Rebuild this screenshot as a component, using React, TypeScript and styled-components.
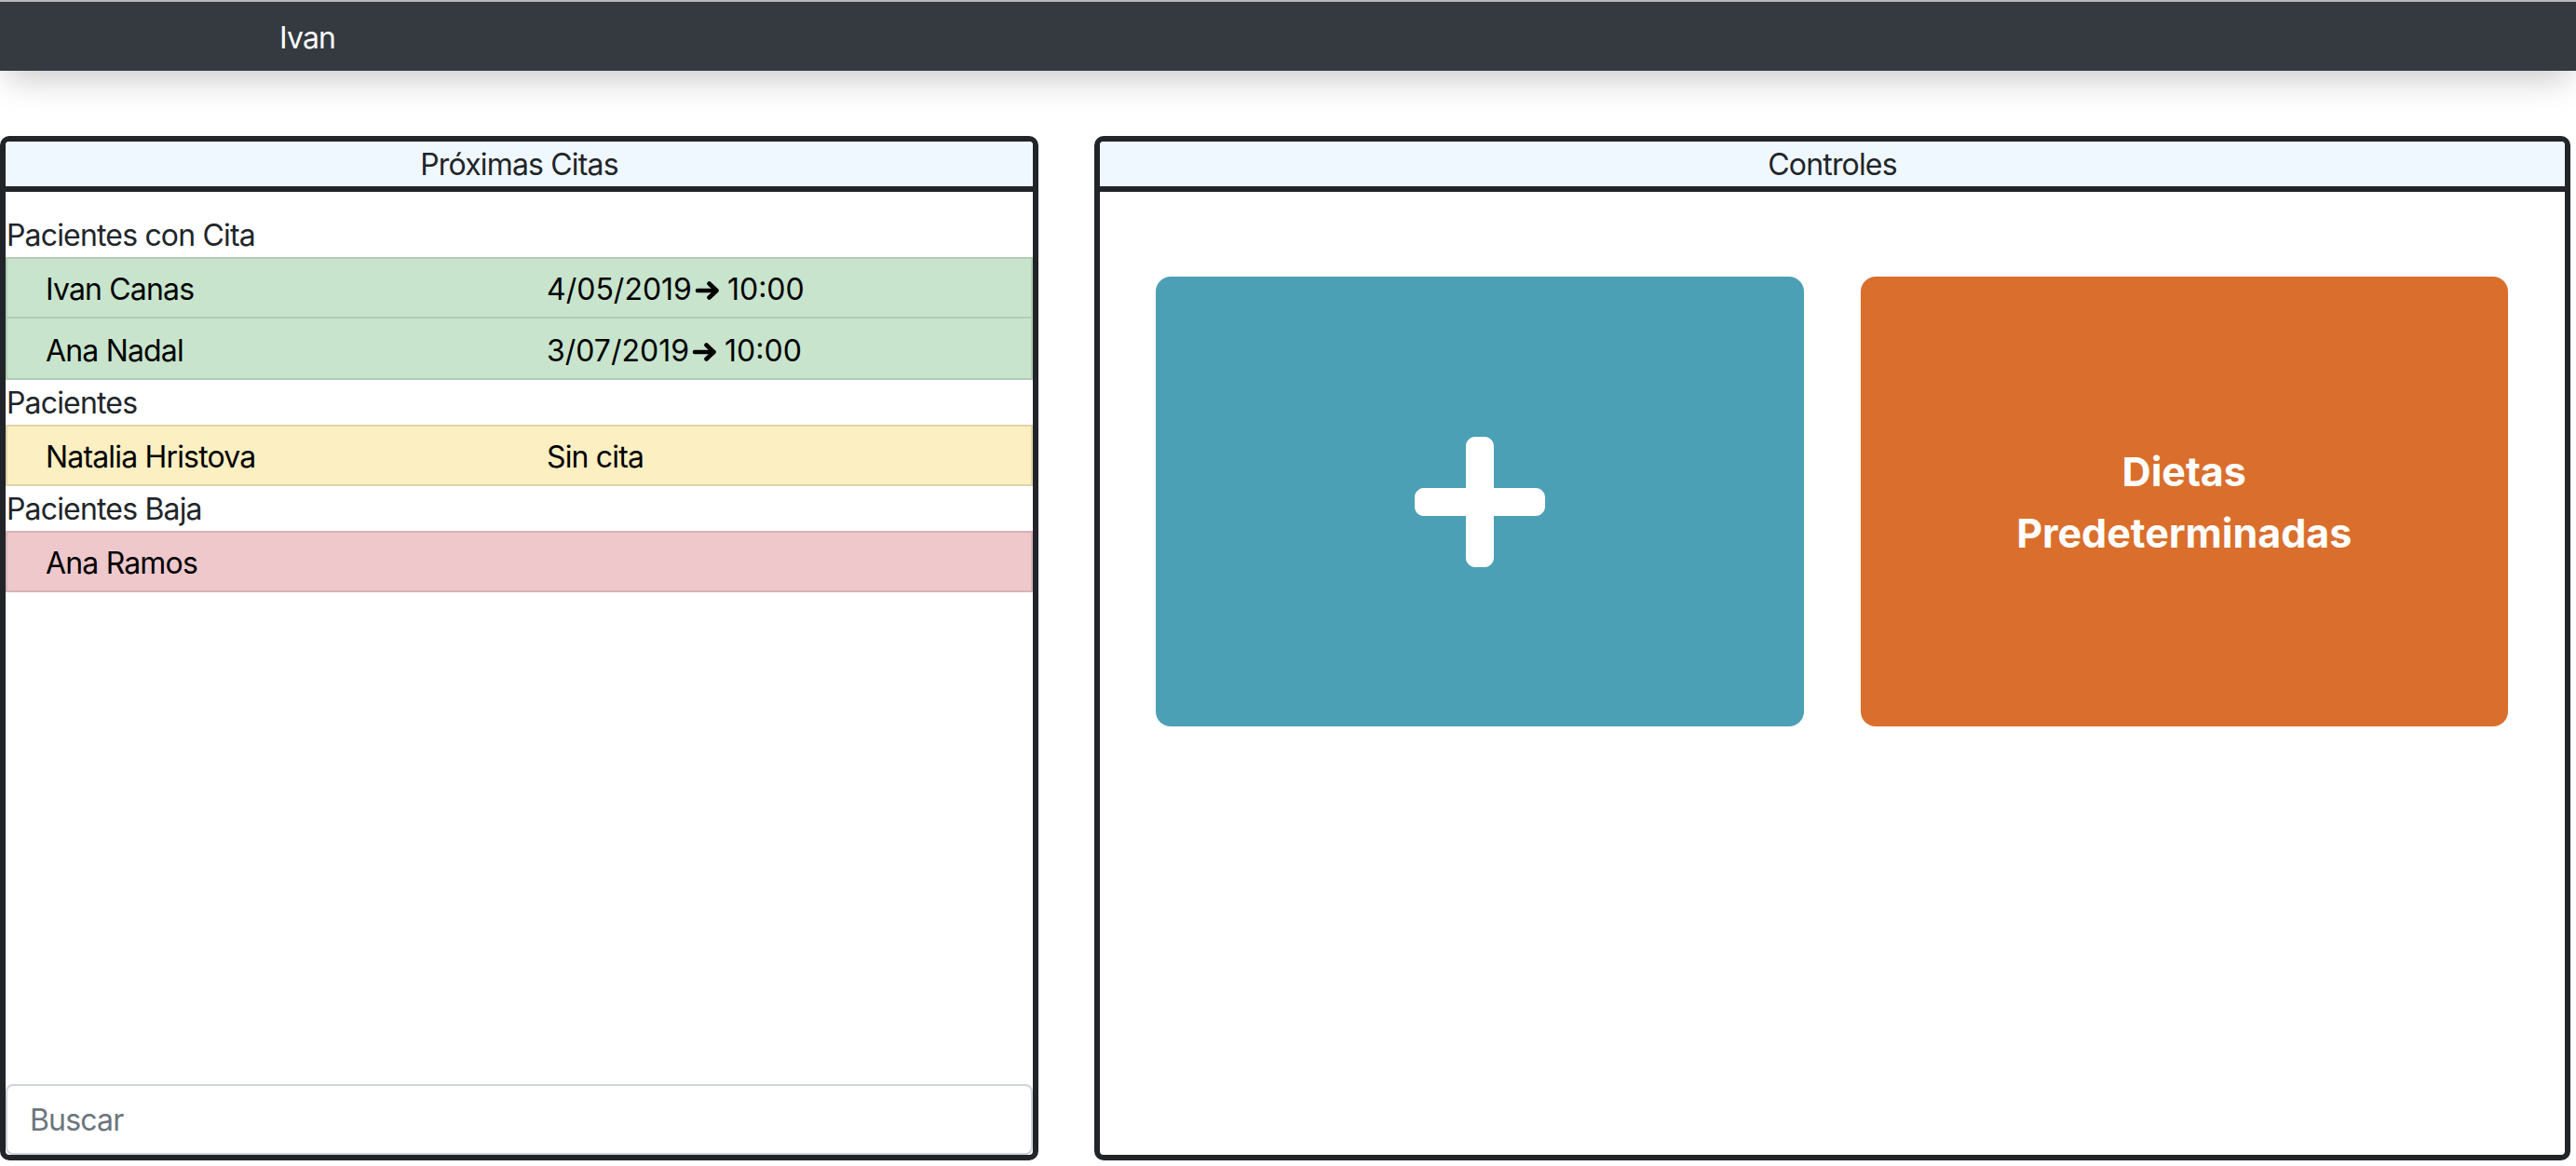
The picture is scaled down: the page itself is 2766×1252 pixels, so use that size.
import React from 'react';
import styled, { createGlobalStyle } from 'styled-components';
import { FaPlus } from 'react-icons/fa';

type Tone = 'success' | 'warning' | 'danger';

interface Patient {
  id: number;
  name: string;
  date?: string;
  time?: string;
  status?: string;
}

const TONES: Record<Tone, { bg: string; border: string }> = {
  success: { bg: '#c8e4cd', border: '#b1cbb5' },
  warning: { bg: '#fcefc1', border: '#e0d4a8' },
  danger: { bg: '#efc8cc', border: '#d6b3b6' },
};

const GROUPS: { title: string; tone: Tone; items: Patient[] }[] = [
  {
    title: 'Pacientes con Cita',
    tone: 'success',
    items: [
      { id: 1, name: 'Ivan Canas', date: '4/05/2019', time: '10:00' },
      { id: 2, name: 'Ana Nadal', date: '3/07/2019', time: '10:00' },
    ],
  },
  {
    title: 'Pacientes',
    tone: 'warning',
    items: [{ id: 3, name: 'Natalia Hristova', status: 'Sin cita' }],
  },
  {
    title: 'Pacientes Baja',
    tone: 'danger',
    items: [{ id: 4, name: 'Ana Ramos' }],
  },
];

const GlobalStyle = createGlobalStyle`
  * {
    box-sizing: border-box;
  }

  body {
    margin: 0;
    background: #fff;
    color: #212529;
    font-family: Inter, 'Liberation Sans', sans-serif;
    font-size: 32px;
    line-height: 48px;
    letter-spacing: -0.026em;
  }
`;

const Arrow = () => (
  <ArrowSvg viewBox="0 0 30 22" aria-hidden="true">
    <path
      d="M3 11h20M15.5 3.5L23.5 11l-8 7.5"
      fill="none"
      stroke="#000"
      strokeWidth="4.6"
      strokeLinecap="round"
      strokeLinejoin="round"
    />
  </ArrowSvg>
);

export default function App() {
  return (
    <>
      <GlobalStyle />
      <Navbar>
        <Brand>Ivan</Brand>
      </Navbar>

      <Main>
        <Panel>
          <PanelHeader>Próximas Citas</PanelHeader>
          <PatientList>
            {GROUPS.map((group) => (
              <React.Fragment key={group.title}>
                <GroupLabel>{group.title}</GroupLabel>
                {group.items.map((itm) => (
                  <PatientRow key={itm.id} $tone={group.tone}>
                    <span>{itm.name}</span>
                    {itm.date ? (
                      <DateCell>
                        {itm.date}
                        <Arrow />
                        {itm.time}
                      </DateCell>
                    ) : (
                      <span>{itm.status}</span>
                    )}
                  </PatientRow>
                ))}
              </React.Fragment>
            ))}
          </PatientList>
          <SearchInput type="text" placeholder="Buscar" />
        </Panel>

        <Panel>
          <PanelHeader>Controles</PanelHeader>
          <Controls>
            <Tile $color="#4ca0b6" type="button">
              <FaPlus size={160} />
            </Tile>
            <Tile $color="#da6f2d" type="button">
              Dietas
              <br />
              Predeterminadas
            </Tile>
          </Controls>
        </Panel>
      </Main>
    </>
  );
}

const Navbar = styled.nav`
  position: relative;
  z-index: 2;
  display: flex;
  align-items: center;
  height: 76px;
  padding: 4px 0 0 300px;
  background: #343a40;
  border-top: 2px solid #b8b8b8;
  box-shadow: 0 14px 36px -6px rgba(0, 0, 0, 0.22);
`;

const Brand = styled.span`
  color: #fff;
  font-size: 32px;
  line-height: 48px;
`;

const Main = styled.main`
  display: grid;
  grid-template-columns: 1115px 1585px;
  column-gap: 60px;
  padding-top: 70px;
`;

const Panel = styled.section`
  display: flex;
  flex-direction: column;
  height: 1100px;
  border: 6px solid #212529;
  border-radius: 10px;
  overflow: hidden;
`;

const PanelHeader = styled.header`
  height: 54px;
  padding-top: 1px;
  line-height: 48px;
  text-align: center;
  background: #f0f8ff;
  border-bottom: 6px solid #212529;
`;

const PatientList = styled.div`
  display: flex;
  flex-direction: column;
  flex: 1;
  padding-top: 22px;
`;

const GroupLabel = styled.div`
  height: 48px;
  padding: 1px 0 0 1px;
  line-height: 48px;
`;

const PatientRow = styled.div<{ $tone: Tone }>`
  display: grid;
  grid-template-columns: 538px 1fr;
  height: 66px;
  padding: 9px 0 5px 41px;
  line-height: 48px;
  color: #000;
  background: ${(p) => TONES[p.$tone].bg};
  border: 2px solid ${(p) => TONES[p.$tone].border};

  & + & {
    border-top-width: 0;
    padding-top: 11px;
  }
`;

const DateCell = styled.span`
  letter-spacing: normal;
`;

const ArrowSvg = styled.svg`
  display: inline-block;
  width: 30px;
  height: 22px;
  margin: 0 5px 0 3px;
  vertical-align: -1px;
`;

const SearchInput = styled.input`
  display: block;
  width: 100%;
  height: 76px;
  margin: 0;
  padding: 0 24px;
  font-family: inherit;
  font-size: 32px;
  letter-spacing: inherit;
  color: #495057;
  background: #fff;
  border: 2px solid #ced4da;
  border-radius: 8px;
  outline: none;

  &::placeholder {
    color: #6c757d;
  }
`;

const Controls = styled.div`
  display: grid;
  grid-template-columns: 1fr 1fr;
  column-gap: 61px;
  padding: 91px 61px 0 60px;
`;

const Tile = styled.button<{ $color: string }>`
  display: flex;
  align-items: center;
  justify-content: center;
  height: 483px;
  padding: 0;
  color: #fff;
  background: ${(p) => p.$color};
  border: none;
  border-radius: 16px;
  font-family: inherit;
  font-size: 43px;
  font-weight: 700;
  line-height: 66px;
  letter-spacing: normal;
  text-align: center;
  cursor: pointer;
`;
